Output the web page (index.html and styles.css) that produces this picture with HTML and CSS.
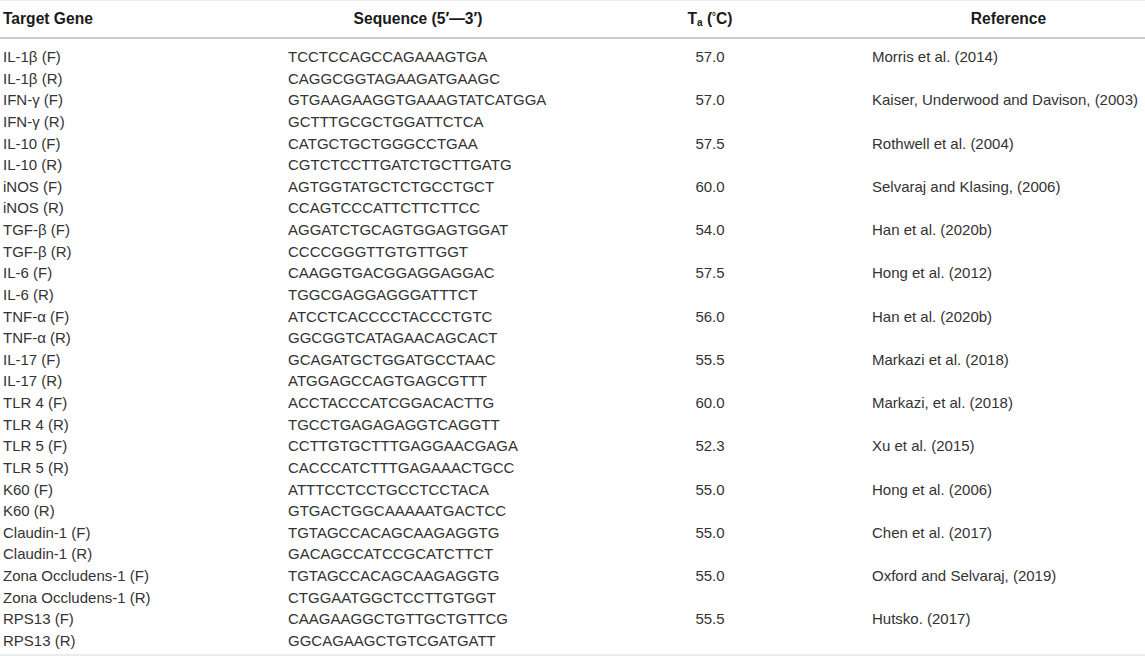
FILE: index.html
```html
<!DOCTYPE html>
<html>
<head>
<meta charset="utf-8">
<link rel="stylesheet" href="styles.css">
</head>
<body>
<div class="table">
  <div class="head">
    <div class="h h-gene">Target Gene</div>
    <div class="h h-center">Sequence (5′—3′)</div>
    <div class="h h-center">T<sub>a</sub> (<sup>°</sup>C)</div>
    <div class="h h-center">Reference</div>
  </div>
  <div class="body">
    <div class="c gene">IL-1β (F)</div><div class="c">TCCTCCAGCCAGAAAGTGA</div><div class="c ta">57.0</div><div class="c">Morris et al. (2014)</div>
    <div class="c gene">IL-1β (R)</div><div class="c">CAGGCGGTAGAAGATGAAGC</div><div class="c ta"></div><div class="c"></div>
    <div class="c gene">IFN-γ (F)</div><div class="c">GTGAAGAAGGTGAAAGTATCATGGA</div><div class="c ta">57.0</div><div class="c">Kaiser, Underwood and Davison, (2003)</div>
    <div class="c gene">IFN-γ (R)</div><div class="c">GCTTTGCGCTGGATTCTCA</div><div class="c ta"></div><div class="c"></div>
    <div class="c gene">IL-10 (F)</div><div class="c">CATGCTGCTGGGCCTGAA</div><div class="c ta">57.5</div><div class="c">Rothwell et al. (2004)</div>
    <div class="c gene">IL-10 (R)</div><div class="c">CGTCTCCTTGATCTGCTTGATG</div><div class="c ta"></div><div class="c"></div>
    <div class="c gene">iNOS (F)</div><div class="c">AGTGGTATGCTCTGCCTGCT</div><div class="c ta">60.0</div><div class="c">Selvaraj and Klasing, (2006)</div>
    <div class="c gene">iNOS (R)</div><div class="c">CCAGTCCCATTCTTCTTCC</div><div class="c ta"></div><div class="c"></div>
    <div class="c gene">TGF-β (F)</div><div class="c">AGGATCTGCAGTGGAGTGGAT</div><div class="c ta">54.0</div><div class="c">Han et al. (2020b)</div>
    <div class="c gene">TGF-β (R)</div><div class="c">CCCCGGGTTGTGTTGGT</div><div class="c ta"></div><div class="c"></div>
    <div class="c gene">IL-6 (F)</div><div class="c">CAAGGTGACGGAGGAGGAC</div><div class="c ta">57.5</div><div class="c">Hong et al. (2012)</div>
    <div class="c gene">IL-6 (R)</div><div class="c">TGGCGAGGAGGGATTTCT</div><div class="c ta"></div><div class="c"></div>
    <div class="c gene">TNF-α (F)</div><div class="c">ATCCTCACCCCTACCCTGTC</div><div class="c ta">56.0</div><div class="c">Han et al. (2020b)</div>
    <div class="c gene">TNF-α (R)</div><div class="c">GGCGGTCATAGAACAGCACT</div><div class="c ta"></div><div class="c"></div>
    <div class="c gene">IL-17 (F)</div><div class="c">GCAGATGCTGGATGCCTAAC</div><div class="c ta">55.5</div><div class="c">Markazi et al. (2018)</div>
    <div class="c gene">IL-17 (R)</div><div class="c">ATGGAGCCAGTGAGCGTTT</div><div class="c ta"></div><div class="c"></div>
    <div class="c gene">TLR 4 (F)</div><div class="c">ACCTACCCATCGGACACTTG</div><div class="c ta">60.0</div><div class="c">Markazi, et al. (2018)</div>
    <div class="c gene">TLR 4 (R)</div><div class="c">TGCCTGAGAGAGGTCAGGTT</div><div class="c ta"></div><div class="c"></div>
    <div class="c gene">TLR 5 (F)</div><div class="c">CCTTGTGCTTTGAGGAACGAGA</div><div class="c ta">52.3</div><div class="c">Xu et al. (2015)</div>
    <div class="c gene">TLR 5 (R)</div><div class="c">CACCCATCTTTGAGAAACTGCC</div><div class="c ta"></div><div class="c"></div>
    <div class="c gene">K60 (F)</div><div class="c">ATTTCCTCCTGCCTCCTACA</div><div class="c ta">55.0</div><div class="c">Hong et al. (2006)</div>
    <div class="c gene">K60 (R)</div><div class="c">GTGACTGGCAAAAATGACTCC</div><div class="c ta"></div><div class="c"></div>
    <div class="c gene">Claudin-1 (F)</div><div class="c">TGTAGCCACAGCAAGAGGTG</div><div class="c ta">55.0</div><div class="c">Chen et al. (2017)</div>
    <div class="c gene">Claudin-1 (R)</div><div class="c">GACAGCCATCCGCATCTTCT</div><div class="c ta"></div><div class="c"></div>
    <div class="c gene">Zona Occludens-1 (F)</div><div class="c">TGTAGCCACAGCAAGAGGTG</div><div class="c ta">55.0</div><div class="c">Oxford and Selvaraj, (2019)</div>
    <div class="c gene">Zona Occludens-1 (R)</div><div class="c">CTGGAATGGCTCCTTGTGGT</div><div class="c ta"></div><div class="c"></div>
    <div class="c gene">RPS13 (F)</div><div class="c">CAAGAAGGCTGTTGCTGTTCG</div><div class="c ta">55.5</div><div class="c">Hutsko. (2017)</div>
    <div class="c gene">RPS13 (R)</div><div class="c">GGCAGAAGCTGTCGATGATT</div><div class="c ta"></div><div class="c"></div>
  </div>
</div>
</body>
</html>
```
FILE: styles.css
```css
html, body {
  margin: 0;
  padding: 0;
  background: #ffffff;
}
body {
  font-family: "Liberation Sans", Arial, Helvetica, sans-serif;
  font-size: 15px;
  color: #333333;
}
.table {
  width: 1145px;
}
.head, .body {
  display: grid;
  grid-template-columns: 288px 260px 324px 273px;
}
.head {
  height: 36px;
  border-top: 1px solid #ececec;
  border-bottom: 2px solid #cdcdcd;
  align-items: center;
}
.h {
  font-size: 15.6px;
  font-weight: bold;
  color: #1a1a1a;
  text-align: center;
  white-space: nowrap;
}
.h-gene {
  text-align: left;
  padding-left: 3px;
}
.h sub {
  font-size: 10px;
  vertical-align: -2px;
  line-height: 0;
}
.h sup {
  font-size: 10px;
  vertical-align: 4px;
  line-height: 0;
}
.body {
  grid-auto-rows: 21.63px;
  padding-top: 7px;
  padding-bottom: 2px;
  border-bottom: 2px solid #ececec;
}
.c {
  line-height: 21.63px;
  white-space: nowrap;
}
.gene {
  padding-left: 3px;
}
.ta {
  text-align: center;
}
```
